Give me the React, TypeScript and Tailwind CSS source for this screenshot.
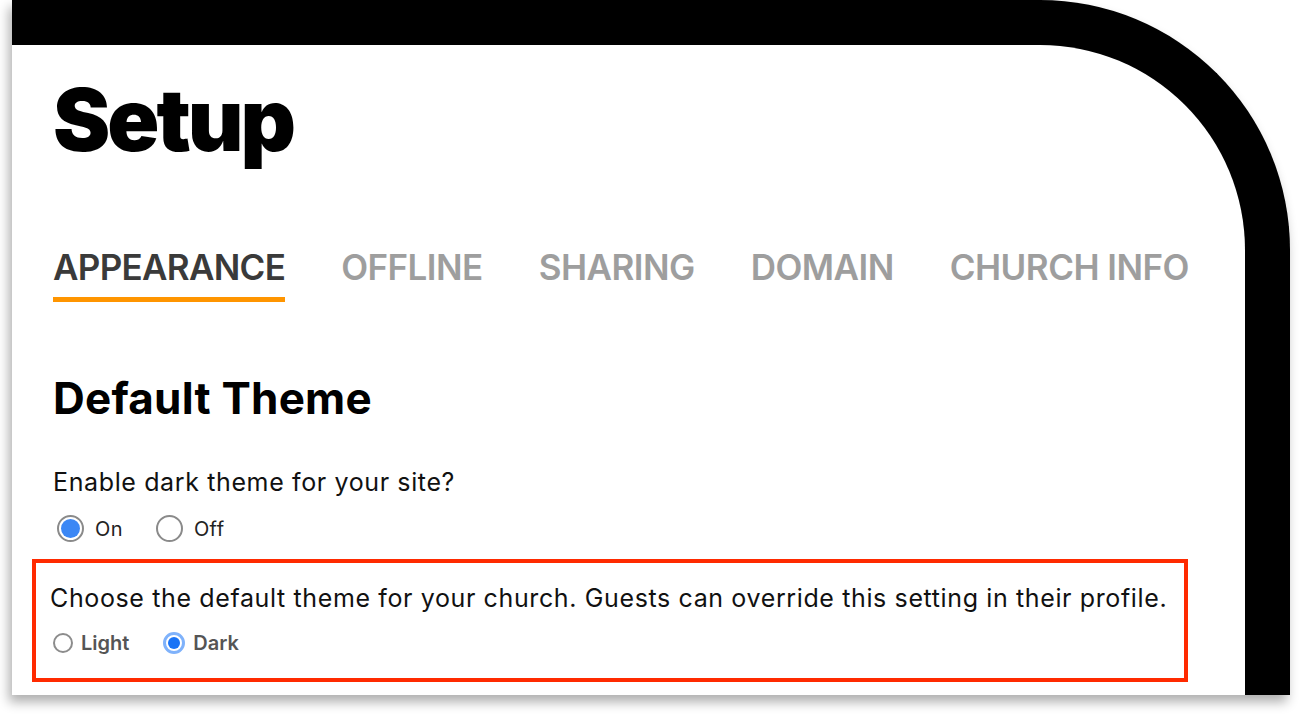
const TABS = ["APPEARANCE", "OFFLINE", "SHARING", "DOMAIN", "CHURCH INFO"];

function BigRadio({ checked, label }: { checked?: boolean; label: string }) {
  return (
    <label className="flex items-center gap-[11px]">
      <span className="flex h-[27px] w-[27px] items-center justify-center rounded-full border-[2px] border-[#8a8a8a] bg-white">
        {checked && <span className="h-[19px] w-[19px] rounded-full bg-[#3b87f5]" />}
      </span>
      <span className="text-[20px] leading-none tracking-[0.02em] text-[#222]">{label}</span>
    </label>
  );
}

function SmallRadio({ checked, label }: { checked?: boolean; label: string }) {
  return (
    <label className="flex items-center gap-[8px]">
      {checked ? (
        <span className="flex h-[22px] w-[22px] items-center justify-center rounded-full border-[3px] border-[#7fb2fb] bg-white">
          <span className="h-[12px] w-[12px] rounded-full bg-[#1a73f5]" />
        </span>
      ) : (
        <span className="h-[20px] w-[20px] rounded-full border-[2px] border-[#8c8c8c] bg-white" />
      )}
      <span className="text-[20px] font-semibold leading-none text-[#555]">{label}</span>
    </label>
  );
}

export default function App() {
  return (
    <div className="h-[720px] w-[1302px] overflow-hidden bg-white" style={{ fontFamily: "Inter, 'Noto Sans', sans-serif" }}>
      <div className="ml-[12px] h-[695px] w-[1278px] rounded-tr-[250px] border-r-[45px] border-t-[45px] border-black bg-white shadow-[-3px_7px_12px_rgba(0,0,0,0.32)]">
        <div className="flex flex-col pl-[41px] pt-[32px]">
          <h1 className="text-[86px] font-black leading-none tracking-[-0.035em] text-black">Setup</h1>

          <nav className="mt-[87px] flex gap-[56px]">
            {TABS.map((tab, i) => (
              <div key={tab} className="flex flex-col">
                <span
                  className={
                    i === 0
                      ? "text-[35px] font-semibold leading-none tracking-[-0.02em] text-[#3a3a3a]"
                      : "text-[35px] font-semibold leading-none tracking-[-0.015em] text-[#9e9e9e]"
                  }
                >
                  {tab}
                </span>
                <span className={i === 0 ? "mt-[12px] h-[5px] bg-[#ff9500]" : "mt-[12px] h-[5px]"} />
              </div>
            ))}
          </nav>

          <h2 className="mt-[74px] text-[44px] font-bold leading-none tracking-[0.005em] text-black">Default Theme</h2>

          <p className="mt-[50px] text-[25px] leading-none tracking-[0.025em] text-[#111]">Enable dark theme for your site?</p>
          <div className="mt-[20px] flex gap-[33px] pl-[4px]">
            <BigRadio checked label="On" />
            <BigRadio label="Off" />
          </div>

          <div className="-ml-[21px] mt-[17px] h-[123px] w-[1156px] border-[4px] border-[#ff2a00] pl-[14px] pt-[23px]">
            <p className="text-[25px] leading-none tracking-[0.025em] text-[#111]">
              Choose the default theme for your church. Guests can override this setting in their profile.
            </p>
            <div className="mt-[21px] flex gap-[34px] pl-[3px]">
              <SmallRadio label="Light" />
              <SmallRadio checked label="Dark" />
            </div>
          </div>
        </div>
      </div>
    </div>
  );
}
